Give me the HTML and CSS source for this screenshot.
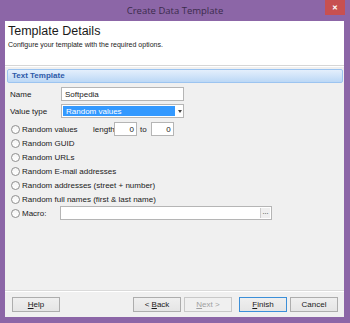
FILE: index.html
```html
<!DOCTYPE html>
<html lang="en">
<head>
    <meta charset="UTF-8">
    <title>Create Data Template</title>
    <link rel="stylesheet" href="styles.css">
</head>
<body>
<div class="window">
    <div class="titlebar">
        <span class="title">Create Data Template</span>
        <span class="close">&#10005;</span>
    </div>
    <div class="client">
        <div class="header">
            <h1>Template Details</h1>
            <p>Configure your template with the required options.</p>
        </div>
        <div class="body">
            <div class="section">Text Template</div>
            <div class="form">
                <div class="row first">
                    <span class="lbl">Name</span>
                    <span class="input name">Softpedia</span>
                </div>
                <div class="row second">
                    <span class="lbl">Value type</span>
                    <span class="input select"><span class="sel">Random values</span><span class="arrow"></span></span>
                </div>
                <div class="row third">
                    <span class="radio"></span><span class="opt val">Random values</span>
                    <span class="len">length</span>
                    <span class="input num">0</span>
                    <span class="to">to</span>
                    <span class="input num">0</span>
                </div>
                <div class="row"><span class="radio"></span><span class="opt">Random GUID</span></div>
                <div class="row"><span class="radio"></span><span class="opt">Random URLs</span></div>
                <div class="row"><span class="radio"></span><span class="opt">Random E-mail addresses</span></div>
                <div class="row"><span class="radio"></span><span class="opt">Random addresses (street + number)</span></div>
                <div class="row"><span class="radio"></span><span class="opt">Random full names (first &amp; last name)</span></div>
                <div class="row">
                    <span class="radio"></span><span class="opt macro-lbl">Macro:</span>
                    <span class="input macro"><span class="dots">...</span></span>
                </div>
            </div>
        </div>
        <div class="footer">
            <span class="btn"><span><u>H</u>elp</span></span>
            <span class="spacer"></span>
            <span class="btn"><span>&lt; <u>B</u>ack</span></span>
            <span class="btn disabled"><span><u>N</u>ext &gt;</span></span>
            <span class="btn default"><span><u>F</u>inish</span></span>
            <span class="btn"><span>Cancel</span></span>
        </div>
    </div>
</div>
</body>
</html>
```

FILE: styles.css
```css
* {
    margin: 0;
    padding: 0;
    box-sizing: border-box;
}

body {
    width: 350px;
    height: 323px;
    overflow: hidden;
    font-family: "Liberation Sans", Arial, sans-serif;
    font-size: 8px;
    color: #1a1a1a;
}

.window {
    width: 350px;
    height: 323px;
    background: #8c66a7;
    display: flex;
    flex-direction: column;
}

.titlebar {
    height: 21px;
    position: relative;
    display: flex;
    align-items: center;
    justify-content: center;
}

.title {
    font-family: "Open Sans", "Liberation Sans", sans-serif;
    font-size: 9.5px;
    color: #3b2b4c;
}

.close {
    position: absolute;
    right: 5px;
    top: 0;
    width: 20px;
    height: 15px;
    background: #c75050;
    color: #fff;
    font-size: 7px;
    font-weight: bold;
    text-align: center;
    line-height: 15px;
}

.client {
    flex: 1;
    margin: 0 6px 6px 5px;
    background: #f0f0f0;
    display: flex;
    flex-direction: column;
}

.header {
    height: 45px;
    background: #fff;
    padding: 3px 0 0 3px;
    border-bottom: 1px solid #d6d6d6;
    box-shadow: 0 1px 0 #fff;
}

.header h1 {
    font-size: 12.5px;
    font-weight: normal;
    line-height: 15px;
}

.header p {
    font-size: 7px;
    margin-top: 2px;
}

.body {
    flex: 1;
}

.section {
    margin: 3px 1px 0 2px;
    height: 14px;
    border: 1px solid #9cc4f0;
    border-radius: 2px;
    background: linear-gradient(#e4effc, #bcd8f6);
    color: #2d5aa8;
    font-weight: bold;
    font-size: 8px;
    line-height: 12px;
    padding-left: 4px;
}

.form {
    padding-left: 5px;
}

.row {
    height: 14px;
    display: flex;
    align-items: center;
}

.row.first {
    margin-top: 4px;
}

.row.second {
    margin-top: 3px;
}

.row.third {
    margin-top: 4px;
}

.lbl {
    width: 51px;
}

.input {
    height: 14px;
    background: #fff;
    border: 1px solid #b5b5b5;
    display: flex;
    align-items: center;
    padding-left: 3px;
}

.name {
    width: 123px;
}

.select {
    width: 123px;
    padding: 1px;
}

.sel {
    width: 113px;
    height: 100%;
    background: #3399ff;
    color: #fff;
    padding-left: 3px;
    display: flex;
    align-items: center;
}

.arrow {
    width: 0;
    height: 0;
    margin-left: 3px;
    border-left: 2px solid transparent;
    border-right: 2px solid transparent;
    border-top: 3px solid #444;
}

.radio {
    width: 9px;
    height: 9px;
    border: 1px solid #8f8f8f;
    border-radius: 50%;
    background: linear-gradient(#f4f4f4, #fff);
    margin: 0 2px 0 1px;
}

.opt {
    white-space: nowrap;
}

.val {
    width: 71px;
}

.len {
    width: 21px;
}

.num {
    width: 23px;
    justify-content: flex-end;
    padding-right: 2px;
}

.to {
    margin: 0 4px 0 3px;
}

.macro-lbl {
    width: 38px;
}

.macro {
    width: 212px;
    justify-content: flex-end;
    padding: 1px;
}

.dots {
    width: 10px;
    height: 100%;
    border-left: 1px solid #ccc;
    background: #efefef;
    font-size: 7px;
    text-align: center;
    line-height: 8px;
}

.footer {
    height: 27px;
    border-top: 1px solid #dadada;
    box-shadow: inset 0 1px 0 #fff;
    display: flex;
    align-items: flex-start;
    padding: 6px 6px 0 7px;
    gap: 3px;
}

.spacer {
    flex: 1;
}

.btn {
    width: 48px;
    height: 15px;
    border: 1px solid #adadad;
    background: linear-gradient(#efefef, #e5e5e5);
    font-size: 8px;
    display: flex;
    align-items: center;
    justify-content: center;
}

.btn.disabled {
    color: #a0a0a0;
    border-color: #c8c8c8;
    background: #f0f0f0;
}

.btn.default {
    border-color: #3c8fd8;
    margin-left: 4px;
}
```
